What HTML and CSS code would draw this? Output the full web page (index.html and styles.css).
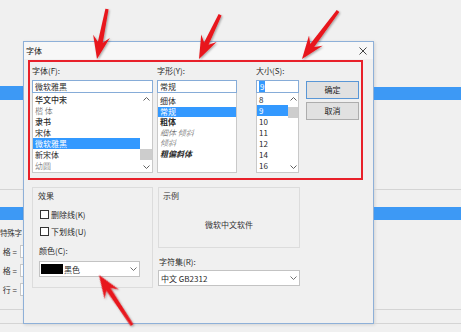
FILE: index.html
```html
<!DOCTYPE html>
<html lang="zh-CN">
<head>
<meta charset="utf-8">
<title>字体</title>
<link rel="stylesheet" href="styles.css">
</head>
<body>
<div class="screen">
  <div class="side">
    <div class="blk h86"></div>
    <div class="bar h14"></div>
    <div class="blk h90 rule"></div>
    <div class="blk h17"></div>
    <div class="bar h13"></div>
    <div class="bg-rows">
      <div class="bg-row first">特殊字</div>
      <div class="bg-row"><span>格 =</span><i class="bg-field"></i></div>
      <div class="bg-row"><span>格 =</span><i class="bg-field"></i></div>
      <div class="bg-row"><span>行 =</span><i class="bg-field"></i></div>
    </div>
    <div class="blk h11 rule"></div>
    <div class="blk h14 rule"></div>
  </div>

  <div class="dialog">
    <div class="titlebar">
      <span class="title">字体</span>
      <svg class="close" width="8" height="8" viewBox="0 0 8 8"><path d="M0.5 0.5L7.5 7.5M7.5 0.5L0.5 7.5" stroke="#444" stroke-width="1" fill="none"/></svg>
    </div>
    <div class="dlg-body">
      <div class="pick">
        <div class="col col-font">
          <div class="lbl">字体(F):</div>
          <div class="edit">微软雅黑</div>
          <div class="list">
            <div class="items">
              <div class="item f-semi">华文中宋</div>
              <div class="item f-light">楷 体</div>
              <div class="item f-semi">隶书</div>
              <div class="item">宋体</div>
              <div class="item sel">微软雅黑</div>
              <div class="item">新宋体</div>
              <div class="item f-light">幼圆</div>
            </div>
            <div class="sbar sbar-font">
              <span class="sb-btn"><svg width="7" height="4" viewBox="0 0 7 4"><path d="M0.5 3.5L3.5 0.5L6.5 3.5" stroke="#606060" fill="none"/></svg></span>
              <span class="thumb thumb-font"></span>
              <span class="sb-btn sb-down"><svg width="7" height="4" viewBox="0 0 7 4"><path d="M0.5 0.5L3.5 3.5L6.5 0.5" stroke="#606060" fill="none"/></svg></span>
            </div>
          </div>
        </div>

        <div class="col col-style">
          <div class="lbl">字形(Y):</div>
          <div class="edit">常规</div>
          <div class="list">
            <div class="items items-style">
              <div class="item s">细体</div>
              <div class="item s sel">常规</div>
              <div class="item s f-bold">粗体</div>
              <div class="item s f-it f-light">细体 倾斜</div>
              <div class="item s f-it f-light">倾斜</div>
              <div class="item s f-it f-bold">粗偏斜体</div>
            </div>
          </div>
        </div>

        <div class="col col-size">
          <div class="lbl">大小(S):</div>
          <div class="edit"><span class="selbox">9</span></div>
          <div class="list">
            <div class="items">
              <div class="item">8</div>
              <div class="item sel">9</div>
              <div class="item">10</div>
              <div class="item">11</div>
              <div class="item">12</div>
              <div class="item">14</div>
              <div class="item">16</div>
            </div>
            <div class="sbar sbar-size">
              <span class="sb-btn"><svg width="7" height="4" viewBox="0 0 7 4"><path d="M0.5 3.5L3.5 0.5L6.5 3.5" stroke="#606060" fill="none"/></svg></span>
              <span class="thumb thumb-size"></span>
              <span class="sb-btn sb-down"><svg width="7" height="4" viewBox="0 0 7 4"><path d="M0.5 0.5L3.5 3.5L6.5 0.5" stroke="#606060" fill="none"/></svg></span>
            </div>
          </div>
        </div>

        <div class="buttons">
          <button class="btn btn-default">确定</button>
          <button class="btn">取消</button>
        </div>
      </div>

      <div class="lower">
        <div class="group effects">
          <div class="glabel">效果</div>
          <div class="check"><span class="box"></span>删除线(K)</div>
          <div class="check check2"><span class="box"></span>下划线(U)</div>
          <div class="lbl-color">颜色(C):</div>
          <div class="combo combo-color">
            <span class="swatch"></span><span>黑色</span>
            <svg class="caret" width="7" height="4" viewBox="0 0 7 4"><path d="M0.5 0.5L3.5 3.5L6.5 0.5" stroke="#707070" fill="none"/></svg>
          </div>
        </div>
        <div class="rightcol">
          <div class="group sample">
            <div class="glabel">示例</div>
            <div class="sample-text">微软中文软件</div>
          </div>
          <div class="lbl-cs">字符集(R):</div>
          <div class="combo combo-cs">
            <span>中文 GB2312</span>
            <svg class="caret" width="7" height="4" viewBox="0 0 7 4"><path d="M0.5 0.5L3.5 3.5L6.5 0.5" stroke="#707070" fill="none"/></svg>
          </div>
        </div>
      </div>
    </div>
  </div>

  <div class="side">
    <div class="blk h87"></div>
    <div class="bar h13"></div>
    <div class="blk h90 rule"></div>
    <div class="blk h17"></div>
    <div class="bar h13"></div>
    <div class="blk h90 rule"></div>
    <div class="blk h14 rule"></div>
  </div>
</div>

<svg class="arrows" width="461" height="332" viewBox="0 0 461 332">
  <defs>
    <filter id="sh" x="-30%" y="-30%" width="160%" height="160%">
      <feDropShadow dx="1" dy="1" stdDeviation="0.8" flood-color="#000" flood-opacity="0.35"/>
    </filter>
  </defs>
  <g fill="#e8161c" filter="url(#sh)">
    <polygon transform="translate(97 59) rotate(101.3)" points="0,0 -23,-8.5 -17,-2.5 -51,-1.6 -51,1.6 -17,2.5 -23,8.5"/>
    <polygon transform="translate(199 59) rotate(115.5)" points="0,0 -23,-8.5 -17,-2.5 -49,-1.6 -49,1.6 -17,2.5 -23,8.5"/>
    <polygon transform="translate(302 59) rotate(126.9)" points="0,0 -23,-8.5 -17,-2.5 -60,-1.6 -60,1.6 -17,2.5 -23,8.5"/>
    <polygon transform="translate(99 275) rotate(-123.4)" points="0,0 -23,-8.5 -17,-2.5 -60,-1.6 -60,1.6 -17,2.5 -23,8.5"/>
  </g>
</svg>
</body>
</html>
```

FILE: styles.css
```css
* { box-sizing: border-box; margin: 0; padding: 0; }
html, body { width: 461px; height: 332px; overflow: hidden; }
body {
  background: #f0f0f0;
  font-family: "Noto Sans CJK SC", "Microsoft YaHei", sans-serif;
  font-size: 8px;
  color: #2a2a2a;
  position: relative;
}
.screen {
  display: grid;
  grid-template-columns: 23px 351px 87px;
  height: 332px;
}

/* background application strips */
.side { display: flex; flex-direction: column; overflow: hidden; }
.blk { flex: none; }
.bar { flex: none; background: #3d99f5; }
.rule { border-bottom: 1px solid #d4d4d4; }
.h86 { height: 86px; } .h87 { height: 87px; }
.h14 { height: 14px; } .h13 { height: 13px; }
.h90 { height: 90px; } .h17 { height: 17px; } .h11 { height: 11px; }
.bg-rows { padding-top: 3px; flex: none; }
.bg-row {
  height: 19px; display: flex; align-items: center; justify-content: flex-end;
  white-space: nowrap; color: #333;
}
.bg-row.first { justify-content: flex-start; font-size: 7.5px; letter-spacing: -0.2px; }
.bg-field {
  flex: none; width: 3px; height: 13px; margin-left: 3px;
  background: #fff; border: 1px solid #c8c8c8; border-right: none;
}

/* dialog window */
.dialog {
  margin-top: 41px; height: 283px; align-self: start;
  border: 1px solid #8eb0d8;
  background: #f0f0f0;
  display: flex; flex-direction: column;
  box-shadow: 1px 1px 3px rgba(0,0,0,0.12);
}
.titlebar {
  height: 17px; flex: none; background: #f7f7f7;
  display: flex; align-items: center; justify-content: space-between;
  padding: 0 6px 0 2px;
}
.title { line-height: 10px; color: #111; }
.close { display: block; }
.dlg-body { padding: 1px 0 0 4px; }

/* red-framed picker */
.pick {
  width: 335px; height: 120px;
  border: 2px solid #e8202a;
  display: flex; align-items: flex-start;
}
.col { padding-top: 4px; display: flex; flex-direction: column; }
.col-font { width: 121px; margin-left: 2px; }
.col-style { width: 80px; margin-left: 4px; }
.col-size { width: 43px; margin-left: 19px; }
.lbl { line-height: 10px; height: 10px; margin-bottom: 4px; }
.edit {
  height: 13px; background: #fff; border: 1px solid #86acd8;
  line-height: 11px; padding-left: 2px; white-space: nowrap;
}
.selbox { background: #3399ff; color: #fff; padding: 0 1px; }
.list {
  height: 80px; background: #fff;
  border: 1px solid #c9c9c9; border-top: none;
  display: flex;
}
.items { flex: 1; padding-top: 1px; min-width: 0; }
.items-style { padding-top: 3px; }
.item { height: 11px; line-height: 11px; padding-left: 2px; white-space: nowrap; }
.item.s { height: 10.5px; line-height: 10.5px; }
.item.sel { background: #3399ff; color: #fff; }
.f-bold { font-weight: 700; }
.f-semi { font-weight: 500; }
.f-light { color: #555; font-weight: 300; }
.f-it { font-style: italic; }

.sbar { flex: none; display: flex; flex-direction: column; align-items: center; background: #fff; }
.sbar-font { width: 12px; }
.sbar-size { width: 10px; }
.sb-btn { height: 11px; display: flex; align-items: center; justify-content: center; }
.sb-btn svg { display: block; }
.sb-down { margin-top: auto; }
.thumb { width: 100%; height: 11px; background: #cdcdcd; }
.thumb-font { margin-top: 45px; }
.thumb-size { margin-top: 3px; }

.buttons { width: 53px; margin-left: 7px; padding-top: 19px; display: flex; flex-direction: column; gap: 3px; }
.btn {
  height: 18px; width: 100%;
  background: #e1e1e1; border: 1px solid #adadad;
  font: inherit; color: #222; line-height: 16px;
}
.btn-default { border-color: #5a97d6; }

/* lower area */
.lower { display: flex; margin: 7px 0 0 4px; align-items: flex-start; }
.group { border: 1px solid #dcdcdc; }
.effects { width: 121px; height: 101px; padding: 3px 0 0 6px; }
.glabel { line-height: 10px; height: 10px; margin-left: -1px; color: #333; }
.check { display: flex; align-items: center; height: 11px; margin-top: 8px; white-space: nowrap; }
.check2 { margin-top: 6px; }
.box { width: 9px; height: 9px; border: 1px solid #333; background: #fff; margin: 0 2px 0 1px; flex: none; }
.lbl-color { line-height: 10px; margin-top: 9px; }
.combo {
  height: 16px; background: #fff; border: 1px solid #c3c3c3;
  display: flex; align-items: center; white-space: nowrap;
}
.combo-color { width: 101px; margin-top: 5px; padding-left: 1px; }
.swatch { width: 22px; height: 10px; background: #000; margin-right: 1px; flex: none; }
.caret { margin-left: auto; margin-right: 2px; display: block; flex: none; }
.rightcol { width: 142px; margin-left: 5px; display: flex; flex-direction: column; }
.sample { height: 61px; padding: 3px 5px 0; display: flex; flex-direction: column; }
.sample-text { flex: 1; display: flex; align-items: center; justify-content: center; color: #333; }
.lbl-cs { line-height: 10px; margin: 9px 0 0 1px; }
.combo-cs { width: 142px; margin-top: 3px; padding-left: 2px; }

/* annotation arrows */
.arrows { position: absolute; left: 0; top: 0; pointer-events: none; }
```
